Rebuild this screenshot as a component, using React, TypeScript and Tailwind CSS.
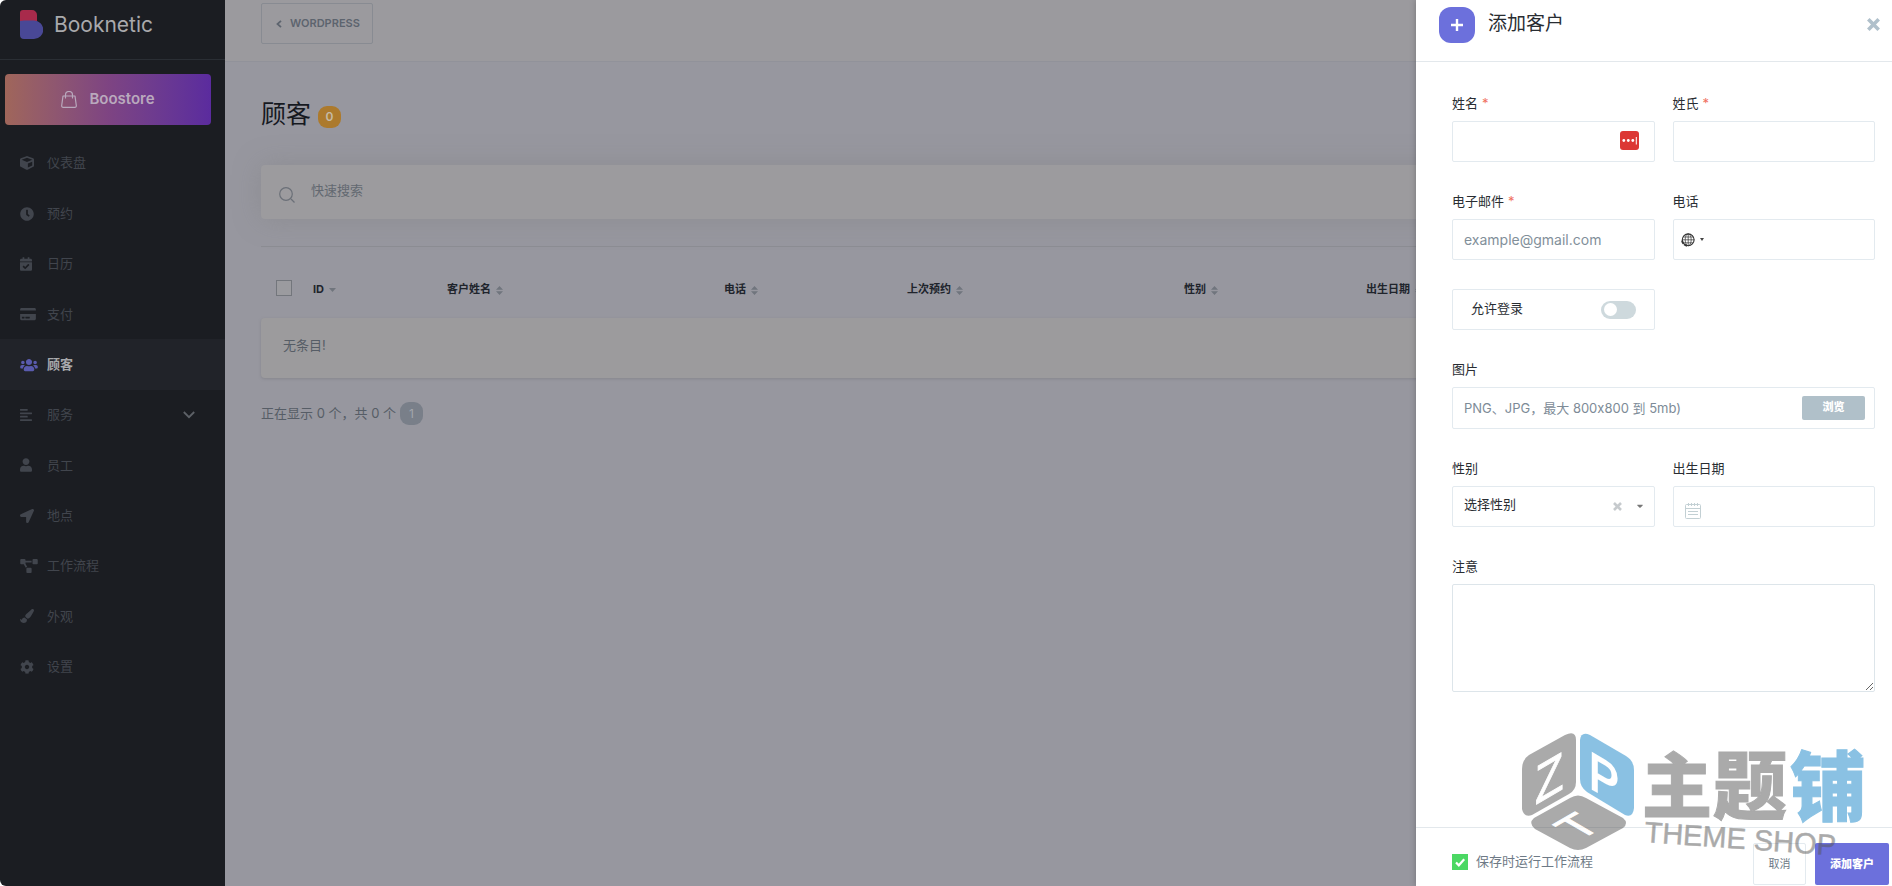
import React from "react";
import {
  FaAlignLeft,
  FaCalendarCheck,
  FaClock,
  FaCog,
  FaCreditCard,
  FaCube,
  FaLocationArrow,
  FaPaintBrush,
  FaProjectDiagram,
  FaSortDown,
  FaUser,
  FaUsers,
} from "react-icons/fa";

const menu = [
  { name: "仪表盘", icon: FaCube, size: "w-[14px] h-[14px]" },
  { name: "预约", icon: FaClock, size: "w-[14px] h-[14px]" },
  { name: "日历", icon: FaCalendarCheck, size: "w-3 h-[14px]" },
  { name: "支付", icon: FaCreditCard, size: "w-4 h-[14px]" },
  { name: "顾客", icon: FaUsers, size: "w-[18px] h-[14px]", active: true },
  { name: "服务", icon: FaAlignLeft, size: "w-3 h-[14px]", children: true },
  { name: "员工", icon: FaUser, size: "w-3 h-[14px]" },
  { name: "地点", icon: FaLocationArrow, size: "w-[14px] h-[14px]" },
  { name: "工作流程", icon: FaProjectDiagram, size: "w-[18px] h-[14px]" },
  { name: "外观", icon: FaPaintBrush, size: "w-[14px] h-[14px]" },
  { name: "设置", icon: FaCog, size: "w-[14px] h-[14px]" },
];

const columns = ["客户姓名", "电话", "上次预约", "性别", "出生日期"];

const inputStyle =
  "block w-full h-[41px] px-[11px] bg-white border border-[#e3eaef] rounded-xs text-[#292d32] placeholder:text-[#828f9a] outline-none";

function Sidebar() {
  return (
    <aside className="flex flex-col shrink-0 w-[225px] bg-[#1b1d22] rounded-l-md">
      <div className="flex items-center h-[60px] pl-5 pb-[10px] border-b border-[#2a2e34]">
        <svg className="w-[23px] h-[29px]" viewBox="0 0 23 29">
          <path d="M3 0h9a5 5 0 0 1 5 5v6H0V3a3 3 0 0 1 3-3z" fill="#a82a4b" />
          <path d="M0 11c3-1 5-.5 9-.5h5a9 9 0 0 1 0 18.500H4a4 4 0 0 1-4-4z" fill="#494896" />
        </svg>
        <span className="ml-[11px] text-[21px] text-[#a9a9ac]">Booknetic</span>
      </div>
      <button className="flex items-center justify-center h-[51px] mt-[14px] ml-[5px] mr-[14px] rounded-sm bg-linear-to-r from-[#a0665a] via-[#7e4482] to-[#5b2b9e] text-[15px] font-semibold text-[#b9a9bd]">
        <svg
          className="w-4 h-[17px] mr-3"
          viewBox="0 0 16 17"
          fill="none"
          stroke="currentColor"
          strokeWidth="1.2"
          strokeLinecap="round"
          strokeLinejoin="round"
        >
          <path d="M2 5h12l1.300 9.500a1.500 1.500 0 0 1-1.500 1.800H2.200a1.500 1.500 0 0 1-1.500-1.800z" />
          <path d="M4.500 7V4a3.500 3.500 0 0 1 7 0v3" />
        </svg>
        Boostore
      </button>
      <nav className="grid auto-rows-fr h-[554px] mt-[13px]">
        {menu.map((item) => (
          <a
            href="#"
            key={item.name}
            className={
              item.active
                ? "flex items-center pl-5 pr-[30px] bg-[#212329] font-bold text-[#a7a8ab]"
                : "flex items-center pl-5 pr-[30px] text-[#41454d]"
            }
          >
            <span className={item.active ? "w-[27px] text-[#5a5bae]" : "w-[27px]"}>
              <item.icon className={item.size} />
            </span>
            {item.name}
            {item.children && (
              <svg
                className="w-3 h-2 ml-auto text-[#5d6167]"
                viewBox="0 0 12 8"
                fill="none"
                stroke="currentColor"
                strokeWidth="1.800"
              >
                <path d="M.8 1 6 6.200 11.200 1" />
              </svg>
            )}
          </a>
        ))}
      </nav>
    </aside>
  );
}

function SortIcon() {
  return (
    <svg className="inline w-[7px] h-[9px] ml-[5px]" viewBox="0 0 7 9" fill="#70757d">
      <path d="M3.500 0 7 3.800H0zM3.500 9 0 5.200h7z" />
    </svg>
  );
}

function Customers() {
  return (
    <main className="flex-1 min-w-0 bg-[#97979f] text-[#565d66]">
      <header className="h-[62px] pl-9 pt-[3px] bg-[#9b9a9e] border-b border-[#91929a]">
        <button className="flex items-center h-[41px] pl-[14px] pr-3 border border-[#888b92] rounded-xs text-[11px] font-semibold text-[#5d646e]">
          <svg
            className="w-[6px] h-2 mr-2"
            viewBox="0 0 6 8"
            fill="none"
            stroke="currentColor"
            strokeWidth="1.800"
          >
            <path d="M5 .8 1.500 4 5 7.200" />
          </svg>
          WORDPRESS
        </button>
      </header>
      <div className="px-9">
        <div className="flex items-center h-9 mt-[35px]">
          <h1 className="text-[25px] text-[#16191f]">顾客</h1>
          <span className="flex items-center justify-center w-[23px] h-[22px] mt-1 ml-[7px] rounded-[9px] bg-[#ac7a2d] text-xs font-semibold text-[#c5baa6]">
            0
          </span>
        </div>
        <div className="flex items-center h-[54px] mt-8 px-[18px] rounded-sm bg-[#9c9b9e] shadow-[0_0_28px_rgba(125,125,125,0.4)]">
          <svg className="w-4 h-4 mt-[6px]" viewBox="0 0 16 16" fill="none" stroke="#6b7078" strokeWidth="1.200">
            <circle cx="7" cy="7" r="6.300" />
            <path d="m12 12 3.500 3.500" />
          </svg>
          <input
            aria-label="快速搜索"
            placeholder="快速搜索"
            className="flex-1 ml-4 pb-[2px] bg-transparent outline-none placeholder:text-[#636971]"
          />
        </div>
        <hr className="mt-[27px] border-[#8b8c92]" />
        <table className="w-full table-fixed">
          <colgroup>
            <col className="w-[52px]" />
            <col className="w-[134px]" />
            <col className="w-[277px]" />
            <col className="w-[183px]" />
            <col className="w-[277px]" />
            <col className="w-[182px]" />
            <col />
          </colgroup>
          <thead>
            <tr className="h-[71px] text-left text-[11px] text-[#20242c]">
              <th className="pl-[15px] pt-[10px]">
                <input
                  type="checkbox"
                  aria-label="全选"
                  className="block appearance-none w-4 h-4 bg-[#9b9b9f] border border-[#73767c]"
                />
              </th>
              <th className="pt-[14px]">
                ID
                <svg className="inline w-[7px] h-1 ml-[5px]" viewBox="0 0 7 4" fill="#70757d">
                  <path d="M0 0h7L3.500 4z" />
                </svg>
              </th>
              {columns.map((name) => (
                <th key={name} className="pt-[14px]">
                  {name}
                  <SortIcon />
                </th>
              ))}
            </tr>
          </thead>
          <tbody>
            <tr className="h-[60px]">
              <td colSpan={7} className="pl-[22px] pb-1 rounded-sm bg-[#9c9b9d] shadow-[0_1px_3px_rgba(110,110,115,0.4)]">
                无条目!
              </td>
            </tr>
          </tbody>
        </table>
        <div className="flex items-center mt-6">
          正在显示 0 个，共 0 个
          <button className="w-[23px] h-[23px] ml-1 rounded-[9px] bg-[#797f89] text-xs text-[#a3a6ac]">1</button>
        </div>
      </div>
    </main>
  );
}

type FieldProps = {
  id: string;
  label: string;
  required?: boolean;
  wide?: boolean;
  children: React.ReactNode;
};

function Field({ id, label, required, wide, children }: FieldProps) {
  return (
    <div className={wide ? "col-span-2" : ""}>
      <label htmlFor={id} className="block h-5 mb-2 leading-5 text-[#292d32]">
        {label}
        {required && <span className="ml-1 text-[#f0705f]">*</span>}
      </label>
      <div className="relative">{children}</div>
    </div>
  );
}

function GlobeIcon() {
  return (
    <svg className="w-[14px] h-[14px]" viewBox="0 0 14 14" fill="none" stroke="#333" strokeWidth=".7">
      <circle cx="7.200" cy="6.800" r="5.900" strokeWidth="1.100" />
      <ellipse cx="7.200" cy="6.800" rx="3" ry="5.900" />
      <path d="M7.200 1v12M1.300 6.800h12M2.300 4h9.800M2.300 9.800h9.800" />
      <path d="M1 7.500c.5 2.800 2.300 4.800 5 5.300" strokeWidth="1.800" strokeDasharray="3.500 1" />
    </svg>
  );
}

function CustomerForm() {
  return (
    <form className="grid grid-cols-2 content-start gap-x-[18px] gap-y-[29px] pl-9 pr-[17px] pt-[31px]">
      <Field id="name" label="姓名" required>
        <input id="name" className={inputStyle} />
        <svg className="absolute right-4 top-[10px] w-[19px] h-[19px]" viewBox="0 0 19 19">
          <rect width="19" height="19" rx="3" fill="#dc3734" />
          <g fill="#fff">
            <circle cx="3.800" cy="9.500" r="1.400" />
            <circle cx="8.300" cy="9.500" r="1.400" />
            <circle cx="12.800" cy="9.500" r="1.400" />
            <path d="M15.800 6h1v7.500h-1z" />
          </g>
        </svg>
      </Field>
      <Field id="surname" label="姓氏" required>
        <input id="surname" className={inputStyle} />
      </Field>
      <Field id="email" label="电子邮件" required>
        <input id="email" type="email" placeholder="example@gmail.com" className={inputStyle + " text-sm"} />
      </Field>
      <Field id="phone" label="电话">
        <input id="phone" type="tel" className={inputStyle + " indent-8"} />
        <button
          type="button"
          aria-label="国家"
          className="absolute left-2 inset-y-0 flex items-center gap-[5px] text-[#444]"
        >
          <GlobeIcon />
          <svg className="w-1 h-[3px]" viewBox="0 0 4 3" fill="currentColor">
            <path d="M0 0h4L2 3z" />
          </svg>
        </button>
      </Field>
      <label className="flex items-center justify-between h-[41px] pl-[18px] pr-[18px] border border-[#e3eaef] rounded-xs text-[#292d32]">
        <span className="pb-[2px]">允许登录</span>
        <input
          type="checkbox"
          className="appearance-none flex items-center w-[35px] h-[18px] pl-[3px] rounded-full bg-[#ced9dd] before:w-[13px] before:h-[13px] before:rounded-full before:bg-white"
        />
      </label>
      <Field id="image" label="图片" wide>
        <div className="flex items-center justify-between h-[42px] pl-[11px] pr-[9px] border border-[#e3eaef] rounded-xs text-[#7d8b97]">
          <span className="pt-[2px]">PNG、JPG，最大 800x800 到 5mb)</span>
          <button
            id="image"
            type="button"
            className="w-[63px] h-6 pb-[2px] rounded-xs bg-[#b0c0c9] text-[11px] font-black text-white"
          >
            浏览
          </button>
        </div>
      </Field>
      <Field id="gender" label="性别">
        <select id="gender" className={inputStyle + " appearance-none pb-[3px]"}>
          <option>选择性别</option>
        </select>
        <svg
          className="absolute right-[33px] top-4 w-[9px] h-[9px]"
          viewBox="0 0 9 9"
          stroke="#c6cacd"
          strokeWidth="2.600"
        >
          <path d="m1 1 7 7M8 1 1 8" />
        </svg>
        <FaSortDown className="absolute right-[10px] top-[13px] w-[10px] h-[10px] text-[#777]" />
      </Field>
      <Field id="birthday" label="出生日期">
        <input id="birthday" className={inputStyle + " indent-6"} />
        <svg
          className="absolute left-3 top-[17px] w-4 h-4"
          viewBox="0 0 16 16"
          fill="none"
          stroke="#c3d0d4"
          strokeWidth="1"
        >
          <rect x=".5" y="1.500" width="15" height="14" rx="1" />
          <path d="M.5 5.500h15M3.500 0v3M6.500 0v3M9.500 0v3M12.500 0v3M3 8.500h10M3 11.500h10" />
        </svg>
      </Field>
      <Field id="note" label="注意" wide>
        <textarea id="note" className="block w-full h-[108px] p-3 border border-[#dde5ea] rounded-xs outline-none resize" />
      </Field>
    </form>
  );
}

function Watermark() {
  return (
    <svg
      className="absolute right-6 bottom-5 w-[346px] h-[160px] opacity-50 pointer-events-none"
      viewBox="0 -26 346 160"
      overflow="visible"
      fontFamily="Noto Sans CJK SC, sans-serif"
    >
      <path d="M7 23 43 3q11-5 11 5v42q0 8-7 12L10 83Q2 86 0 77V37q0-9 7-14z" fill="#575757" />
      <path d="M68 3 104 24q8 5 8 14v38q-1 10-9 7L65 60q-7-5-7-13V8q1-9 10-5z" fill="#1785c9" />
      <path d="M48 66q8-5 16 0l37 20q6 5 0 10l-37 20q-8 4-16 0L13 97q-7-6-1-11z" fill="#575757" />
      <g fontFamily="Liberation Sans, sans-serif" fill="#fff" stroke="#fff">
        <text transform="matrix(.866 -.500 0 1 13 73)" fontSize="54" strokeWidth="1">
          Z
        </text>
        <text transform="matrix(.866 .500 0 1 67 55)" fontSize="52" strokeWidth="2">
          P
        </text>
        <text transform="matrix(.866 -.500 .866 .500 57 109)" fontSize="46" strokeWidth="1">
          T
        </text>
      </g>
      <g fontWeight="900" strokeWidth="1">
        <text x="120" y="80" fontSize="70" fill="#575757" stroke="#575757">
          主
        </text>
        <text x="191" y="81" fontSize="74" fill="#575757" stroke="#575757">
          题
        </text>
        <text x="268" y="83" fontSize="76" fill="#1785c9" stroke="#1785c9">
          铺
        </text>
      </g>
      <text
        transform="translate(122 110) rotate(4)"
        fontFamily="Liberation Sans, sans-serif"
        fontSize="29"
        fill="#575757"
        stroke="#575757"
        strokeWidth=".5"
      >
        THEME SHOP
      </text>
    </svg>
  );
}

function Drawer() {
  return (
    <section className="absolute inset-y-0 right-0 flex flex-col w-[476px] max-w-full bg-white shadow-[0_0_6px_rgba(0,0,0,0.25)]">
      <header className="flex items-center h-[62px] pl-[23px] pr-3 pb-3 border-b border-[#e3e8ec]">
        <span className="flex items-center justify-center w-9 h-9 rounded-xl bg-[#6c70dc] text-white">
          <svg className="w-3 h-3" viewBox="0 0 12 12" stroke="currentColor" strokeWidth="2.400">
            <path d="M6 0v12M0 6h12" />
          </svg>
        </span>
        <h2 className="ml-[13px] text-[19px] text-[#292d32]">添加客户</h2>
        <button aria-label="关闭" className="ml-auto text-[#b0c0cb]">
          <svg className="w-[13px] h-[13px]" viewBox="0 0 13 13" stroke="currentColor" strokeWidth="3.600">
            <path d="m1.300 1.300 10.400 10.400M11.700 1.300 1.300 11.700" />
          </svg>
        </button>
      </header>
      <div className="flex-1">
        <CustomerForm />
      </div>
      <footer className="flex items-start pl-9 pr-[3px] pt-[15px] h-[59px] border-t border-[#e3e8ec] text-[#6e7a86]">
        <label className="flex items-center h-[38px]">
          <span className="relative mr-2">
            <input
              type="checkbox"
              defaultChecked
              className="block appearance-none w-4 h-4 checked:bg-[#4bd863]"
            />
            <svg
              className="absolute inset-0 w-4 h-4 pointer-events-none"
              viewBox="0 0 16 16"
              fill="none"
              stroke="#fff"
              strokeWidth="2.200"
            >
              <path d="m4 8.500 2.800 2.800L12.200 5.200" />
            </svg>
          </span>
          保存时运行工作流程
        </label>
        <button className="w-[53px] h-[42px] ml-auto bg-white border border-[#e3eaef] rounded-xs text-[11px]">取消</button>
        <button className="w-[74px] h-[42px] ml-[9px] rounded-xs bg-[#6c70dc] text-[11px] font-black text-white">
          添加客户
        </button>
      </footer>
      <Watermark />
    </section>
  );
}

function App() {
  return (
    <div className="relative flex min-h-screen overflow-hidden bg-white font-['Inter','Noto_Sans_CJK_SC',sans-serif] text-[13px]">
      <Sidebar />
      <Customers />
      <Drawer />
    </div>
  );
}

export default App;
